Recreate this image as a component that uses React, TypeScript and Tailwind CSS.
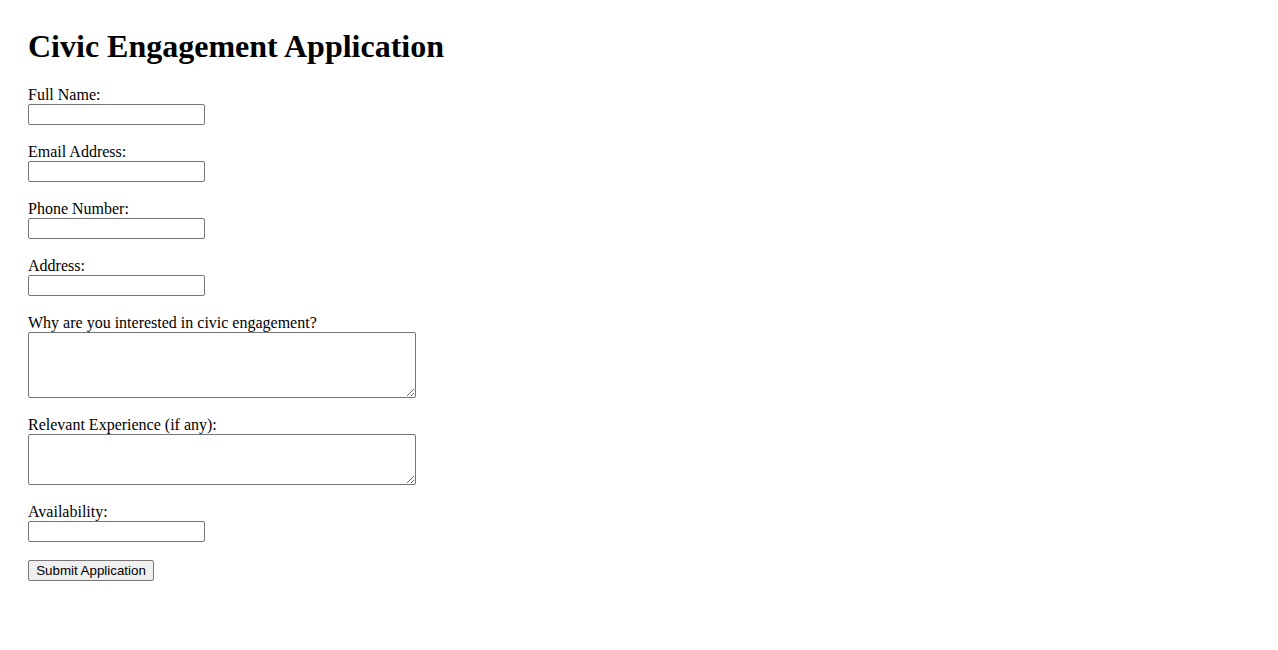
const fields: { label: string; kind: "input" | "textarea"; h?: string }[] = [
  { label: "Full Name:", kind: "input" },
  { label: "Email Address:", kind: "input" },
  { label: "Phone Number:", kind: "input" },
  { label: "Address:", kind: "input" },
  { label: "Why are you interested in civic engagement?", kind: "textarea", h: "h-[66px]" },
  { label: "Relevant Experience (if any):", kind: "textarea", h: "h-[51px]" },
  { label: "Availability:", kind: "input" },
];

export default function App() {
  return (
    <div className="min-h-screen bg-white p-[28px] font-['Liberation_Serif','Times_New_Roman',serif] text-black">
      <h1 className="mb-[21px] text-[32px] font-bold leading-[37px]">Civic Engagement Application</h1>

      <form className="flex flex-col items-start gap-[18px]" onSubmit={(e) => e.preventDefault()}>
        {fields.map((f) => (
          <div key={f.label} className="flex flex-col items-start">
            <label className="text-[16px] leading-[18px]">{f.label}</label>
            {f.kind === "input" ? (
              <input
                type="text"
                className="h-[21px] w-[177px] rounded-[2px] border border-[#767676] bg-white px-[2px] font-['Liberation_Sans',Arial,sans-serif] text-[13.33px]"
              />
            ) : (
              <textarea
                className={`w-[388px] ${f.h} resize rounded-[2px] border border-[#767676] bg-white px-[2px] font-['Liberation_Mono',monospace] text-[13.33px]`}
              />
            )}
          </div>
        ))}

        <button
          type="submit"
          className="flex h-[21px] w-[126px] items-center justify-center rounded-[2px] border border-[#767676] bg-[#efefef] font-['Liberation_Sans',Arial,sans-serif] text-[13.33px] text-black"
        >
          Submit Application
        </button>
      </form>
    </div>
  );
}
